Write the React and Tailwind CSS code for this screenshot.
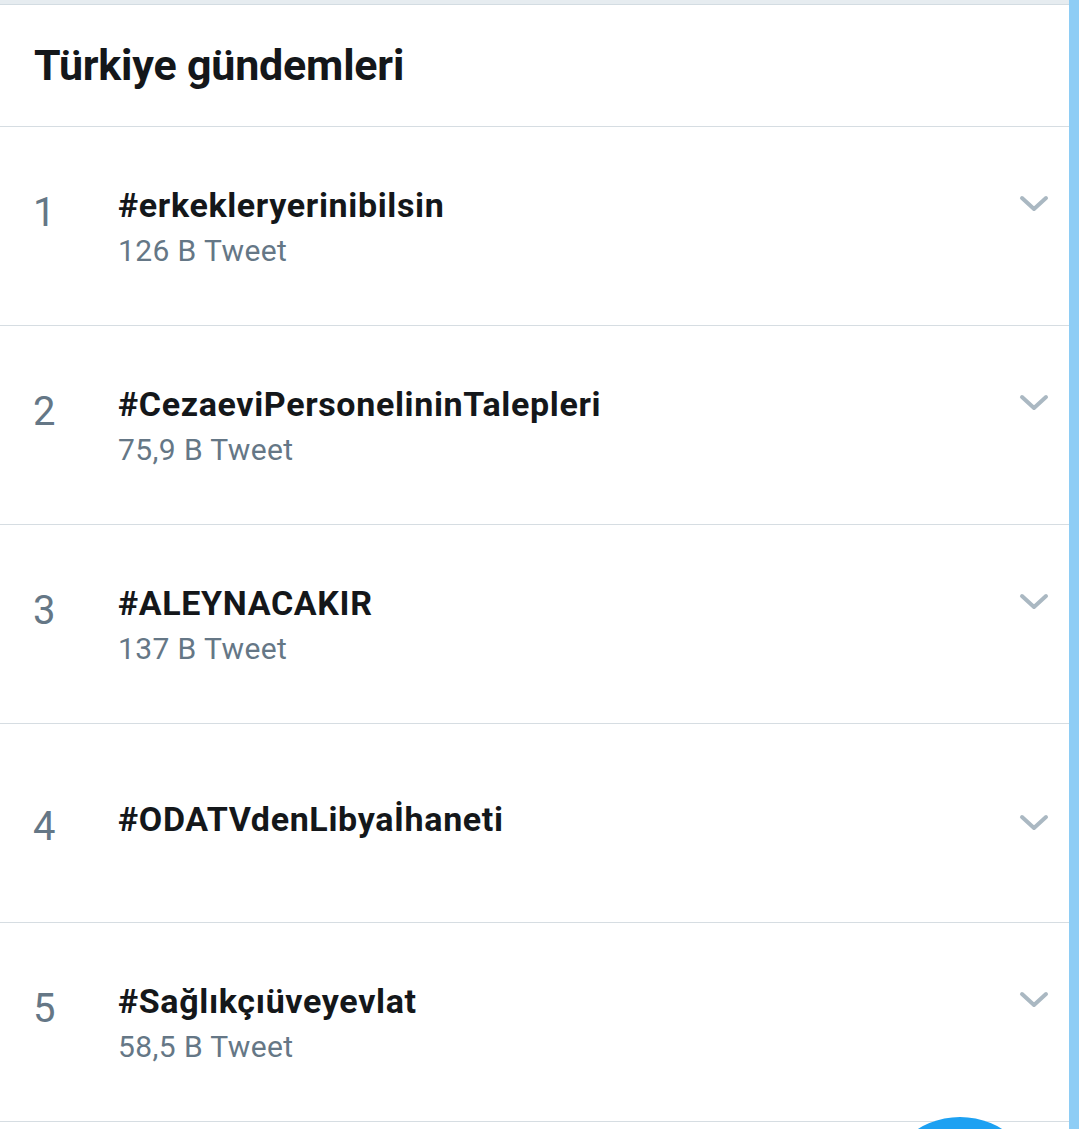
import React from "react";

const trends = [
  { rank: 1, tag: "#erkekleryerinibilsin", count: "126 B Tweet" },
  { rank: 2, tag: "#CezaeviPersonelininTalepleri", count: "75,9 B Tweet" },
  { rank: 3, tag: "#ALEYNACAKIR", count: "137 B Tweet" },
  { rank: 4, tag: "#ODATVdenLibyaİhaneti", count: null },
  { rank: 5, tag: "#Sağlıkçıüveyevlat", count: "58,5 B Tweet" },
];

function Chevron() {
  return (
    <svg width="30" height="20" viewBox="0 0 30 20" fill="none">
      <path
        d="M3 4 L15 15 L27 4"
        stroke="#aab8c2"
        strokeWidth="4"
        strokeLinecap="round"
        strokeLinejoin="round"
      />
    </svg>
  );
}

export default function App() {
  return (
    <div
      className="relative flex h-[1129px] w-[1079px] overflow-hidden bg-white"
      style={{ fontFamily: "Roboto, 'Liberation Sans', sans-serif" }}
    >
      <div className="flex w-[1069px] flex-col">
        <div className="h-[5px] border-b border-[#d3dce2] bg-[#e6ecf0]" />
        <div className="flex h-[122px] items-center border-b border-[#d6dde2] px-[34px]">
          <h1 className="text-[43px] font-bold tracking-[-0.2px] text-[#14171a]">
            Türkiye gündemleri
          </h1>
        </div>

        {trends.map((t) => (
          <div
            key={t.rank}
            className="flex h-[199px] items-center border-b border-[#d6dde2]"
          >
            <div className="flex flex-1 items-start">
              <div className="w-[118px] pl-[33px] pt-[7px] text-[40px] font-normal leading-[40px] text-[#657786]">
                {t.rank}
              </div>
              <div className="flex flex-col">
                <div className="text-[34px] font-bold leading-[38px] tracking-[0.65px] text-[#14171a]">
                  {t.tag}
                </div>
                {t.count && (
                  <div className="mt-[11px] text-[30px] leading-[32px] tracking-[0.4px] text-[#657786]">
                    {t.count}
                  </div>
                )}
              </div>
            </div>
            <div className={`pr-[20px] ${t.count ? "self-center -mt-[44px]" : ""}`}>
              <Chevron />
            </div>
          </div>
        ))}
      </div>
      <div className="w-[10px] bg-[#8ecdf5]" />

      <div className="absolute left-[880px] top-[1117px] h-[160px] w-[160px] rounded-full bg-[#1da1f2]" />
    </div>
  );
}
